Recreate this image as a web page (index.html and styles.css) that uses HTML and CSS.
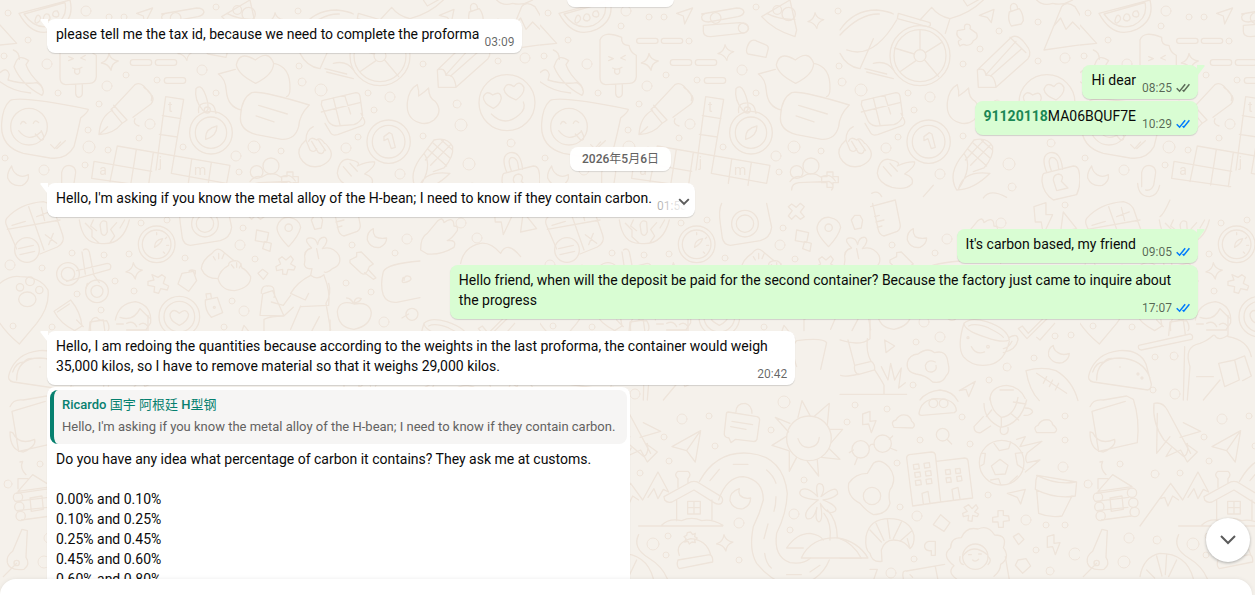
FILE: index.html
```html
<!DOCTYPE html>
<html lang="en">
<head>
<meta charset="utf-8">
<title>Chat</title>
<link rel="stylesheet" href="styles.css">
</head>
<body>
<svg class="defs" aria-hidden="true">
  <symbol id="ticks" viewBox="0 0 14 10"><path d="M.7 5.2 3.6 8.2 9.2 1.2M6.6 7 7.8 8.2 13.4 1.2" fill="none" stroke="currentColor" stroke-width="1.5"/></symbol>
  <symbol id="tail-in" viewBox="0 0 8 13"><path d="M.6 1.4 8 11.2V0H1.600C.4 0 .1.7.6 1.400z" fill="currentColor"/></symbol>
  <symbol id="tail-out" viewBox="0 0 8 13"><path d="M6.400 0H0v11.2l7.400-9.800C7.900.7 7.600 0 6.400 0z" fill="currentColor"/></symbol>
  <symbol id="star" viewBox="-30 -30 60 60"><path d="M-3-26Q2-6 25-3 5 3 3 25-5 5-26 3-6-4-3-26z"/></symbol>
</svg>
<main class="chat">
  <svg class="wallpaper" aria-hidden="true">
    <defs>
      <pattern id="doodles" width="540" height="640" patternUnits="userSpaceOnUse">
        <g class="ink">
          <g transform="scale(.3333)">
            <path d="M57 40 210 0Q225 60 170 88 100 120 57 40zM72 42 195 8Q205 55 160 76 108 94 72 42z"/>
            <path d="M105 62q5-22 14-14 8 10-6 20-8 4-8-6zM130 55q4-18 16-12 10 16-4 20-10 0-12-8zM158 45q0-14 14-12 10 14-2 18-10 0-12-6z"/>
            <path d="M0 75 50 130 0 135M410 40 458 24 434 72 430 48zM485 42 590 24q20 0 22 12-2 10-18 14L505 66q-20 0-20-14 0-8 12-12"/>
            <circle cx="527" cy="54" r="16"/><path d="M490 76 600 68q26 4 26 18-4 14-24 14l-90 10q-22 0-22-16z"/><circle cx="610" cy="84" r="15"/>
            <path d="M665 50 750 0 770 90 765 110Q700 90 665 50zM680 40Q720 60 765 58"/><circle cx="746" cy="42" r="20"/><circle cx="712" cy="30" r="13"/>
            <use href="#star" x="800" y="34" width="56" height="56"/>
            <path d="M180 120Q190 90 245 112q-2 25 22 24 4 22 22 30v64q-2 20-20 20l-72 4q-18-2-17-22zM227 254v28q2 10 10 10 10-2 10-12v-26M206 170l14 6-14 6M256 166l-14 8 14 6M218 204q14 8 28-2M224 208v10q8 10 15 0v-12"/>
            <path d="M40 150q18 6 18 28M46 190q10-30 40-8l-8 12q10 30 44 60 14 20 4 32-60-30-84-86zM0 218q20-20 28 6l-4 16q50 14 86 8 18 10 18 22M0 245q40 30 92 34"/>
            <use href="#star" x="300" y="156" width="60" height="60"/><use href="#star" x="530" y="130" width="56" height="56"/>
            <rect x="391" y="179" width="64" height="17" rx="8"/><rect x="466" y="179" width="64" height="17" rx="8"/><rect x="493" y="233" width="64" height="17" rx="8"/>
            <rect x="290" y="115" width="64" height="15" rx="7"/><rect x="364" y="115" width="64" height="15" rx="7"/>
            <path d="M622 140q10-28 30-16l24 10q12 4 8 16l-6 22-54-10q-8-6-2-22z"/>
            <path d="M767 250Q715 225 709 195 718 150 766 180 806 148 821 190 820 225 767 250zM706 208 655 222q22 14 24 50 4 50 46 58M822 190q50 10 48 76 0 20-10 24"/>
            <path d="M755 278Q780 270 928 315 898 345 896 380 885 420 845 418L770 404Q715 390 722 345 725 295 755 278zM776 316 862 342M768 348 822 366"/>
            <path d="M30 302Q60 286 265 328 265 336 242 354 230 410 222 440 200 480 150 474L70 460Q0 440 5 370 8 320 30 302zM62 372q6-14 16-2M100 370q6-14 16-2M56 392q30 38 66 4M106 402l16 18q12 2 8-14l-6-14M152 434l12 12 18-20M170 446l26-24"/><circle cx="87" cy="380" r="55"/>
            <path d="M345 318 405 254q14-8 26 4l26 30q6 12-4 24l-54 40M345 318l-12 10 34 42 14-10-40-44M338 330Q300 350 297 404 340 402 366 370M297 404l26-24M432 262q30 20 22 40M405 356q-8 16 12 22"/>
            <path d="M497 290 551 298 514 520M497 290 468 510M487 347 543 356M478 403 532 411M352 438 690 496 680 550M352 438 330 545M282 484 455 514M282 484 275 535 452 560M409 448 392 555M460 457 445 560M575 478 565 550M634 488 624 556M514 520 680 550"/>
            <path d="M588 266q12-14 24 8 14 30 12 54-8 14-16 2-26-30-20-64zM596 338q-4-24 14-28 26-6 34 14l4 16M617 412q0-26 34-34 0 30-34 40z"/><circle cx="633" cy="398" r="64"/><circle cx="633" cy="398" r="47"/><circle cx="622" cy="330" r="9"/>
            <path d="M966 302 1068 278q10 0 12 10l8 58q-4 20-26 28l-54 4q-20-2-26-20l-18-44zM964 336l116-28M1000 294l20 80M1034 286l18 56M975 370l18 30q4 8 20 4l76-28q8-6 4-16l-10-20"/>
            <path d="M940 380q-22 10-22 40-30 26-18 52 20 36 62 26 40-18 30-46-14-24-18-22-14-20-24-10-18-12-24 4M918 420l12 30q14 10 20-4M935 424l20 34q14 8 18-8M955 420l22 32M1012 520q6-44 34-42 40 8 26 20 30-14 52-12 4 12-30 36 30 10 22 30-20 20-60 10-40-12-44-42M1030 500l24 28M1050 490l22 24"/>
            <circle cx="1166" cy="425" r="65"/><circle cx="1166" cy="425" r="49"/><path d="M1152 410l16-12 8 4 10 40-12 4-10-30-12 6zM1222 308q4-40 30-54 6 20 4 34 20-14 30-24 0 30 20 40 24 30-4 56-20 16-44 8-40-12-36-60z"/>
            <path d="M35 498q-14 20-12 36 12 28 44 22 22-12 18-32-18 10-34 0-14-10-16-26zM185 560v-42q4-22 22-22 20 2 20 22l-6 38q-8 18-24 14M173 550q2 40 36 40 24-4 30-34"/>
            <path d="M750 545q14-20 36-14 30-20 56 0 28-14 44 12M755 570q0-20 22-22l90-4q20 10 8 26M845 530h16v-14h18v14h16v18h-16v14h-18v-14h-16z"/><circle cx="770" cy="516" r="19"/><circle cx="813" cy="498" r="24"/>
            <text x="504" y="336" class="glyph">t</text><text x="298" y="526" class="glyph">a</text><text x="476" y="502" class="glyph">j</text><text x="582" y="524" class="glyph">m</text>
          </g>
          <g transform="translate(300 0) scale(.3333)">
            <circle cx="240" cy="167" r="90"/><circle cx="240" cy="167" r="78"/><circle cx="240" cy="167" r="18"/>
            <path d="M240 149V90M256 158 304 128M254 180l42 50M228 182l-46 32M223 162l-60-18M0 90Q40 30 110 30q38 4 50 12M0 105Q60 40 118 42M20 150Q100 180 170 60M0 160q20 40 60 46l40-90M75 206 140 222M80 216q80 20 80 20M100 190q40-10 60 20M175 40l95 28q4 12-8 12L172 56zM240 60 275 22q20 26 55 34Q390 40 430 0M330 56 316 100M370 0l12 18 36-20"/>
            <path d="M352 92l22-4q-4-20 14-14 6 6 2 12l20 14q6 16-10 22-4 14-22 14-8-6-18 2-12-16 4-20-18-8-12-26zM418 46l44-18-8 40-12-16zM508 36l30-10q12 16 12 36l-6 10-30 6q-12-18-6-42zM513 34q-6-22 8-24 12 2 12 18"/>
            <path d="M412 210 514 112q20-12 44 22 20 24 6 42L468 262 415 262zM412 210q22-10 26 16 24-6 30 34M438 224 528 124M510 112l48 46M452 228 545 146"/>
            <path d="M612 150 665 20q14-18 40 0l64 108zM640 80l22-26 16 34 20-22 24 24M590 0q20 20 48 10 30 8 60-10"/>
            <circle cx="621" cy="308" r="84"/><path d="M574 342q40 40 82 4 24-20 14-40M580 325q-30-14-30-34 8-22 28-6 24-14 26 10-4 20-24 30zM648 300q-34-14-36-32 8-24 30-8 16-22 30 2 2 20-24 38z"/>
            <path d="M350 570Q320 520 372 460 400 500 356 566 370 510 450 520 400 570 350 570zM372 460l30-40q40-10 56 20 4 30-26 64L400 515M384 448l56 50M400 430l50 44M424 420l34 30M376 480l54-58M392 496l60-62"/>
            <path d="M612 520 700 498q12 0 16 12 10 40-6 74l-70 16q-30-20-34-56 0-20 6-24zM620 516q-20-50 10-58 32-6 38 50M634 512q-14-36 2-40 18 0 20 34M640 540q0-16 16-18 18 4 8 22l20 20-34 8z"/>
            <path d="M95 580q20-10 30 10M250 590l30-34M430 594q20-30 70-2"/>
          </g>
          <g transform="translate(0 200) scale(.3333)">
            <path d="M20 55Q60 10 130 5q20 4 30 20l28 80q8 22-16 36L120 162M20 55q-6 10 0 22l30 70M22 88 180 60M86 20l46 130M36 76l40-12M110 50l38-14M124 22l10 40M136 104l34 26M160 100l-14 34"/><circle cx="81" cy="150" r="37"/><path d="M56 146l44-10M60 164l44-10"/>
            <path d="M240 50Q250 45 270 0M238 60q10 70 60 70 70 10 90-70M256 70l20 20 0 20 20 18M280 60l-8 18 18 14M320 66q-14-10-20 8l4 26q10 14 18-4zM350 68l-18 20 12 20-14 20M374 60l-14 24"/>
            <circle cx="470" cy="133" r="55"/><circle cx="470" cy="133" r="43"/><path d="M464 140q0-20 24-24-6 16-24 26zM470 98v6M500 112l-4 4M506 136h-6M494 160l-4-4"/>
            <path d="M545 10q-10 20-4 60l6 44q4 20 24 22l90-14q30-8 34-40L680 10"/><circle cx="615" cy="71" r="40"/><circle cx="615" cy="71" r="26"/>
            <path d="M866 140q-40-40-34-62 10-28 36-26 32 6 34 30-6 26-36 58z"/><circle cx="866" cy="83" r="11"/>
            <path d="M934 60l10-14h16l8 14-4 24-20 4zM770 90l36 8-6 30-34-6zM794 124l20 6-4 24-22-8zM755 12l14 10 12-12 12 10-12 16 12 14-12 8-14-12-12 12-10-10 12-16-12-12z"/>
            <path d="M992 20 1066 0M998 10l16 76q4 20 18 22l40-14q12-8 8-24l-14-70M1004 50l14-4M1008 66l24-6M1012 82l14-4M1120 86q-20 10-18 34 10 26 38 22 20-10 20-28-20 4-34-4-8-12-6-24z"/>
            <path d="M250 150q12-8 18 6l14 70M246 156l10 66M200 244l130-36q8-16-8-18l-92 22M262 250l-4 14M282 226l16 22"/><circle cx="204" cy="222" r="34"/><circle cx="204" cy="222" r="20"/><circle cx="291" cy="274" r="34"/><circle cx="291" cy="274" r="18"/>
            <use href="#star" x="374" y="184" width="58" height="58"/>
            <path d="M456 224l18 8 12-8 10 8-6 18 16 8-4 12-20-4-6 14-14-4 2-16-20-4 0-12 18-4zM546 220l34-6 10 28-24 32-32-22zM568 216q-4-6 8-6l10 2v10"/>
            <path d="M636 160q-30 20-32 46 12 30 50 30M636 160q14-20 30-8l36 30M640 170l6 10M656 160v16M672 162l-6 14M686 196q-26 14-32 40 10 36 50 36 50-10 48-42-14-22-26-26-4-22-20-22-22 2-20 14zM694 194l8 10M710 188v14M724 192l-6 12"/>
            <path d="M846 170l12 10 14-12 8 10-8 14 14 8-4 10-18-2-4 16-12-2 0-14-18 4-2-12 14-8-6-14zM774 220l14-12 16 12-14 18z"/>
            <path d="M915 180q-6-30 20-36-26-26-8-30 20-4 26 20 4-24 22-22 14 10-8 34 30-10 50 20 10 30-20 40-16 14-24 10M915 180l-2 14q4 14 20 12M936 206l-4 20q20 16 40-2M950 146l6 30M932 226q-40 20-60 54l44 20 10-20M972 226q20 50 14 90l-84 4M986 250q10 30-8 60l14 80M872 286l-22 30-36-10M902 318l-30 70M958 350l-22 42M784 280q0-24 18-22 20-2 20 14 4 14 0 20M788 282l30-10 34 76-72-2zM852 348q-40 0-60 10l0 34M880 322l-26 24"/>
            <path d="M1050 180l20-10 0-12 14-2 36 36-12 8q-10 30-24 20l-34-32zM1094 218l26 20 8-4-24-26"/>
            <path d="M1150 215q10-24 110-32M1150 215q-10 40 0 70 10 24 40 22l70-14M1212 242q0-20 18-12 10 10-10 16-20 8-10-14"/>
            <path d="M0 250Q30 225 60 230 120 230 144 270 150 320 110 370L58 432Q20 400 0 370"/><ellipse cx="82" cy="298" rx="26" ry="22"/><circle cx="60" cy="262" r="11"/><circle cx="90" cy="244" r="13"/><circle cx="118" cy="270" r="11"/>
            <path d="M162 334 212 300q30 36 34 78l-22 14Q180 370 162 334zM172 336l36-24M272 392q-4-40 18-40 12 14 30 10 12 20 4 30M346 360q10-50 60-55 50 10 46 64l-14 20M360 352q40 14 60-26 20 20 28 28M350 372h20M380 370q20-10 30 10M418 374q14-10 24 4M380 390h60"/>
            <circle cx="538" cy="350" r="61"/><circle cx="538" cy="350" r="46"/><path d="M538 376q-30-14-28-34 10-20 28-2 20-18 28 4-2 20-28 32zM616 300l36-8 16 46-34 14q-20-20-18-52zM620 294l-2-12 14-2 2 12"/><circle cx="643" cy="322" r="3"/>
            <path d="M1062 312q-44-14-50 22 2 50 50 54 50-10 52-50-4-34-52-26zM1062 312q-10-18-22-18M1062 308q4-20 22-12-6 12-22 12M1206 354l20-12"/><circle cx="1236" cy="343" r="18"/>
            <path d="M718 416l14-40 32 40M770 500q-20-60 0-78 80-10 90 6l-18 80"/>
            <path d="M1262 150q0-40 20-50l30-36q16-16 20 4 30-22 30 10 14 0 10 14-16 24-30 30 30-4 20 20-40 24-80 20zM1382 190q10-50 60-60 30-4 60 30 20-40 60 10M1482 20l36-12 0 36 20 0-28 60-6-38-18 0zM1570 36l40 50-48 10z"/>
          </g>
          <g transform="translate(300 200) scale(.3333)">
            <path d="M0 420q60 20 90-4l0-56M24 420l20 76M82 416q-4 40 10 66M44 496l50-12q12 10 10 26l-50 14q-14-10-10-28zM56 522q-40 10-54 4M104 510q20 30 28 46v26M0 583H200M124 500l20 40 8-50 12 50 20-36-8 60 20-16"/>
            <path d="M234 462q30-22 50-4 36-10 40 30 8 30-6 40-10 24-40 18-20-20-50-24-30-6-26-34 6-24 32-26zM286 486q-22-10-30 10 0 22 20 20 16-4 12-20M134 420l30 18-26 20zM358 572l48-28-20 46-8-22z"/>
            <path d="M372 370Q350 440 370 470q30 34 80 24 44-10 58-70M372 370q20-20 70-4 60 20 66 54-20 10-70-8-66-20-66-42zM386 378q20-10 60 6 40 20 44 28M508 412q26-14 26 8-6 30-44 38M516 424q-10 20-26 22M394 440q14 26 40 16"/><circle cx="384" cy="413" r="3"/><circle cx="444" cy="440" r="4"/>
            <path d="M535 386l12-8 18 22 46-46M535 386l26 30 60-60M590 412l10 8 44-50M640 436q-18 10-14 32 14 26 42 20 20-10 20-28-20 8-34-2-14-8-14-22z"/>
            <path d="M558 512q50-14 90 0 50 30 66 90M558 512q10 60 40 90M590 520l90 60M620 530l-10 20M638 540l-10 20M656 550l-10 20M450 600q0-40 50-44 40 4 56 40M480 570l40 0M240 600q20-26 60-30 40 4 54 34"/>
          </g>
          <g transform="translate(0 200) scale(.3333)">
            <path d="M28 520q20-60 90-68 60-4 80 40l16 60q0 14-10 18L40 546q-20-4-12-26zM50 540q0-66 70-66 70 4 90 60M38 516q10-30 34-30 10-14 30-10M120 500v2"/><circle cx="174" cy="522" r="3"/><circle cx="186" cy="534" r="3"/>
            <path d="M176 436 330 402q12 4 6 16L184 450q-12-2-8-14zM266 406l4-40 40-6 6 44M250 380l-20-20M330 500q-20-60 30-70 20-6 40-24M330 500l-8 100M314 440l-4 160M404 406q10 20 40 0v-60M444 410q60 10 70 60M416 490l48-10 14 60-44 20zM464 480l30-12 20 60-26 14M370 600l50-60M350 530h50"/>
          </g>
          <g transform="translate(-120 400) scale(.3333)">
            <circle cx="1167" cy="115" r="67"/><path d="M1134 116q10 30 36 26 26-4 28-30M1098 110l-42 26 50 16M1110 70l-44-18 40 44M1134 52l12-50 24 44M1184 48l44-38-6 66M1228 88h40l-34 40M1228 146l32 32-56-6M1192 180l4 48-34-44M1130 172l-22 42 0-60M360 250"/>
            <path d="M925 36l86 14q8 2 8 10l-8 58q-4 8-12 6l-52-6-14 10-6-14q-16-2-14-16l6-54q0-8 6-8zM948 36q0-26 28-26 20 6 20 30M936 64l62 10M932 80l46 8M756 140 842 92 826 186 800 152zM800 152l40-58"/>
            <path d="M838 245Q890 150 990 160 1090 170 1102 280 1100 340 1070 400 1060 470 1110 488 1150 494 1172 474M896 300Q920 230 970 230 1030 240 1030 300 1020 340 1000 380 986 450 1010 490 1050 540 1110 560 1200 550 1228 480M870 242l28-34M940 193h44M1040 210q20 16 28 40M1068 290q0 24-6 44M1044 372l-12 44M1034 460q4 30 20 44M1100 524h44M1170 516l30-20"/>
            <path d="M732 290 812 246q10-4 20 0l72 44q8 10 0 20-10 6-22-2L822 270 756 306q-14 4-22-6zM770 300v62M876 300v60M774 262v-26q-14-12 0-22h30q12 10 0 22v14M803 304h38v38h-38zM822 304v38M803 323h38M656 378H908M725 376q20-22 60-14 30-14 60 0 30-6 64 14M540 378 632 250l36 50 46-84 32 60-16-8-16 28-12-30-18 26M600 296l14-4 10 26 14-30 18 12"/>
            <path d="M958 266q-30 10-28 36 10 28 40 24 22-10 22-32-20 4-32-8-6-10-2-20zM778 466Q764 430 812 416 860 420 872 464M774 480l96-16q10 6 8 22l-100 20q-10-8-4-26zM812 396l6 8 8-4-2 10 8 4-8 6 2 8-10-2-8 6-4-8-10 2 4-10-6-6 8-4 2-8z"/><use href="#star" x="886" y="400" width="58" height="58"/>
            <path d="M1195 300q-70-6-52-30 20-12 50 20-10-50 14-36 10 14-4 36 50-40 50-8-14 14-44 18 50 20 36 34-20 14-44-24 10 50-4 56-14-6-6-44-10 40-30 34-16-20 34-56zM1212 340q24 30 18 80M1222 330q30 30 30 84M1100 444q30-44 70-44 30 4 40 20M1100 444h50M1144 474q30-64 110-60 60 10 90 60z"/>
            <path d="M582 10q26-6 40 20l70 130M582 10q-6 60 30 110l60 50q16-10 10-40M592 40l-2 120 40-50M670 68l52 26-62 18M634 144l-16 26 44-20 20 36 30-30-36-26"/>
            <path d="M390 20q10-24 40-20l70-12 20 10q20 60 12 130l-116 26-20-120 100-30M390 96l8 2q20 40 66 20 6 20-34 38-40-4-40-60zM420 186l8-2q-10 20 10 40M414 266v-30h30M414 274l44-50 58 36zM410 280l100-14M406 304l100-12M410 332l94-10M424 360l90-12M450 294l36-6 4 40-36 6z"/><circle cx="414" cy="292" r="14"/><circle cx="418" cy="320" r="14"/><circle cx="422" cy="348" r="14"/><circle cx="516" cy="278" r="14"/><circle cx="520" cy="308" r="14"/><circle cx="524" cy="336" r="14"/>
            <path d="M426 388l16 4-4 80q14 20-6 36-44 6-50-20-4-20 16-34zM410 490q-20 20-40 40M360 540"/><circle cx="410" cy="489" r="8"/>
            <path d="M540 530q10-60 60-70 80 0 100 76M560 510l24 24M590 468l16 60M620 464l-4 60M650 480l-24 50M656 404q-20 40 30 70 40 24 56 62"/>
          </g>
          <g transform="translate(300 400) scale(.3333)">
            <path d="M237 40q6-40 50-44 60 0 62 36l-6 6-98 8q-8 0-8-6z"/><circle cx="280" cy="10" r="13"/><circle cx="311" cy="10" r="13"/>
            <path d="M432 10q0 50 50 72 60-10 78-82M450-6q4 40 34 58 40-4 50-60M484 52v30M455 30l-16 20M512 40l24 20M520 6l38 6M430 50l-28 30q0 20 20 18l30-20M556 24q20 0 22 12-8 12-26 10M482 82q-6 20 10 22 16-4 12-22"/>
            <path d="M68 42l22-8 0 30 18-2-14 36-8-26-18 2zM162 82q-12-18 6-22 10-20 34-14 12 8 12 16 16 14 4 22zM590 98q-12-18 4-22 10-20 34-16 10 6 10 14 20 14 6 24zM882 152l24-8-2 30 18-2-16 34-8-28-16 2z"/>
            <circle cx="62" cy="148" r="26"/><circle cx="128" cy="131" r="26"/><path d="M88 140q4-10 14-6M40 150l-12 8M52 174l-8 20M150 144l20 8M148 118l10-10M321 118l14 14"/><circle cx="308" cy="104" r="19"/>
            <path d="M200 174q0-8 8-10l66-8q10 0 12 8l16 142-84 12zM288 184l86-10q8 0 10 8l14 112-96 12M220 194l16-2 2 14-16 2zM252 190l16-2 2 14-16 2zM224 218l16-2 2 14-16 2zM256 214l16-2 2 14-16 2zM226 242l16-2 2 14-16 2zM258 238l16-2 2 14-16 2zM316 210l14-2 2 14-14 2zM346 207l14-2 2 14-14 2zM318 234l14-2 2 14-14 2zM350 230l14-2 2 14-14 2zM250 312l-4-32 18-6 6 36M340 298l-4-30 18-6 6 34"/>
            <circle cx="485" cy="188" r="67"/><path d="M480 178l24 18-8 26-30 2-12-26zM462 130l16 22 28-6 6-20M424 160l12 0-4 32-10 6M526 160l22-2M526 160l6 34 20 14M452 240l24-4 6 18M510 248l22-20M530 118l26-8-16 30 66-16-44 34q-10 20 0 30l38-8-44 36"/>
            <path d="M100 190q20-16 46 10 24 30 10 60-14 14-6 50-10 34-50 34-20-10-40-34-40-20-34-60 20-30 56-30z"/><circle cx="96" cy="288" r="26"/>
            <path d="M588 240l4-14 118 20-4 42q-60 10-120-20zM590 226q60 30 116 20M590 270l6 70q34 14 70 8l30-60M502 280l54-12-14 44-10-20z"/>
            <path d="M78 410q10-54 70-54 60 0 74 50 2 30-12 40-14-20-34-24-40-10-52 28l2 34q-30 4-36-24-16-10-12-50zM90 390l34 36M108 370l24 52M142 356l8 60M184 366l-24 50M214 394l-34 30M210 446l-8-30"/>
            <path d="M302 344l28 24-18 26-32-20zM386 314l10 12 12-12 6 10-10 12 12 6-4 8-14-4-2 18-12-2 2-16-16 4-2-10 14-6-10-12zM474 332h16v14l16 2 2 14-18 2v18l-14 0-2-16-16 0v-14l16-2zM286 424h-20q-14 4-12 18 4 12 20 10v14h12zM520 410l16-10 16 18-16 16zM622 410l20-6 0 26 18-2-14 36-8-24-16 2zM534 480l24-4 14 22-24 22-22-24z"/>
            <path d="M350 537q-30-20-8-40-40-30-10-54 0-30 32-30 14-34 50-26 30-14 50 18 40 0 26 38 22 30-8 50 0 20-20 36"/><circle cx="406" cy="470" r="38"/><path d="M368 468q30-40 74-4M398 480q8 8 18-2M386 464h8M416 462h8M360 470q-4 20 10 24M444 470q14 10 0 24M190 537q-6-28 10-24l114-20M286 500l8 40M210 524l8 8M496 470l12 70M0 475l64 0Q40 430 0 416M90 508l22 0-12 34"/>
          </g>
          <g class="dots">
            <circle cx="8" cy="13" r="3"/><circle cx="86" cy="11" r="5"/><circle cx="28" cy="40" r="3"/><circle cx="109" cy="17" r="3"/><circle cx="124" cy="17" r="3"/><circle cx="149" cy="41" r="3"/><circle cx="216" cy="7" r="3"/><circle cx="81" cy="26" r="3"/><circle cx="4" cy="56" r="3"/><circle cx="47" cy="64" r="5"/><circle cx="126" cy="75" r="3"/><circle cx="107" cy="86" r="5"/><circle cx="58" cy="93" r="3"/><circle cx="157" cy="80" r="3"/><circle cx="202" cy="70" r="5"/><circle cx="216" cy="93" r="3"/><circle cx="99" cy="104" r="3"/><circle cx="150" cy="124" r="5"/><circle cx="88" cy="130" r="3"/><circle cx="139" cy="138" r="3"/><circle cx="89" cy="147" r="6"/><circle cx="108" cy="150" r="3"/><circle cx="183" cy="147" r="3"/><circle cx="254" cy="147" r="6"/><circle cx="236" cy="156" r="5"/><circle cx="281" cy="151" r="3"/><circle cx="44" cy="170" r="5"/><circle cx="85" cy="165" r="3"/><circle cx="5" cy="158" r="3"/><circle cx="239" cy="172" r="3"/><circle cx="302" cy="82" r="4"/><circle cx="321" cy="90" r="6"/><circle cx="299" cy="66" r="3"/><circle cx="298" cy="11" r="3"/><circle cx="368" cy="93" r="3"/><circle cx="390" cy="97" r="5"/><circle cx="374" cy="110" r="3"/><circle cx="358" cy="137" r="3"/><circle cx="346" cy="148" r="5"/><circle cx="400" cy="174" r="5"/><circle cx="423" cy="136" r="3"/><circle cx="469" cy="164" r="6"/><circle cx="472" cy="187" r="4"/><circle cx="511" cy="143" r="4"/><circle cx="457" cy="104" r="4"/><circle cx="461" cy="125" r="6"/><circle cx="459" cy="31" r="3"/><circle cx="498" cy="22" r="3"/><circle cx="525" cy="58" r="5"/><circle cx="498" cy="61" r="3"/><circle cx="440" cy="49" r="3"/><circle cx="423" cy="64" r="3"/>
            <circle cx="141" cy="223" r="3"/><circle cx="167" cy="220" r="3"/><circle cx="72" cy="253" r="3"/><circle cx="104" cy="255" r="3"/><circle cx="129" cy="254" r="3"/><circle cx="10" cy="265" r="5"/><circle cx="42" cy="268" r="3"/><circle cx="185" cy="258" r="3"/><circle cx="240" cy="245" r="5"/><circle cx="243" cy="228" r="3"/><circle cx="255" cy="259" r="3"/><circle cx="115" cy="281" r="3"/><circle cx="77" cy="294" r="3"/><circle cx="134" cy="291" r="3"/><circle cx="232" cy="301" r="3"/><circle cx="244" cy="311" r="5"/><circle cx="101" cy="310" r="3"/><circle cx="52" cy="327" r="3"/><circle cx="224" cy="327" r="3"/><circle cx="352" cy="245" r="3"/><circle cx="395" cy="253" r="3"/><circle cx="407" cy="239" r="5"/><circle cx="346" cy="283" r="3"/><circle cx="371" cy="292" r="3"/><circle cx="384" cy="322" r="5"/><circle cx="461" cy="223" r="5"/><circle cx="477" cy="238" r="5"/><circle cx="525" cy="205" r="3"/><circle cx="376" cy="342" r="3"/><circle cx="400" cy="337" r="5"/><circle cx="467" cy="367" r="4"/><circle cx="449" cy="380" r="3"/><circle cx="515" cy="336" r="3"/><circle cx="531" cy="335" r="3"/><circle cx="494" cy="358" r="3"/><circle cx="373" cy="385" r="3"/><circle cx="13" cy="326" r="3"/><circle cx="75" cy="357" r="3"/><circle cx="94" cy="356" r="4"/><circle cx="73" cy="390" r="3"/><circle cx="95" cy="394" r="5"/>
            <circle cx="142" cy="419" r="5"/><circle cx="169" cy="416" r="3"/><circle cx="124" cy="437" r="3"/><circle cx="175" cy="446" r="3"/><circle cx="129" cy="461" r="3"/><circle cx="231" cy="430" r="3"/><circle cx="244" cy="402" r="6"/><circle cx="264" cy="480" r="3"/><circle cx="254" cy="514" r="5"/><circle cx="250" cy="530" r="3"/><circle cx="199" cy="523" r="5"/><circle cx="113" cy="544" r="6"/><circle cx="128" cy="536" r="3"/><circle cx="126" cy="555" r="3"/><circle cx="199" cy="560" r="3"/><circle cx="347" cy="409" r="3"/><circle cx="315" cy="405" r="3"/><circle cx="307" cy="422" r="3"/><circle cx="422" cy="417" r="3"/><circle cx="430" cy="444" r="3"/><circle cx="380" cy="440" r="3"/><circle cx="525" cy="416" r="3"/><circle cx="525" cy="440" r="3"/><circle cx="523" cy="467" r="5"/><circle cx="357" cy="463" r="3"/><circle cx="448" cy="495" r="3"/><circle cx="360" cy="507" r="3"/><circle cx="377" cy="516" r="5"/><circle cx="486" cy="520" r="5"/><circle cx="506" cy="525" r="3"/><circle cx="525" cy="525" r="3"/><circle cx="496" cy="550" r="3"/><circle cx="535" cy="554" r="6"/><circle cx="510" cy="571" r="4"/><circle cx="351" cy="573" r="5"/><circle cx="374" cy="559" r="3"/><circle cx="8" cy="484" r="4"/><circle cx="40" cy="464" r="3"/><circle cx="75" cy="474" r="4"/><circle cx="100" cy="473" r="3"/><circle cx="49" cy="538" r="5"/><circle cx="44" cy="562" r="6"/><circle cx="77" cy="540" r="4"/>
          </g>
        </g>
      </pattern>
    </defs>
    <rect width="100%" height="100%" fill="url(#doodles)"/>
  </svg>

  <div class="messages">
    <div class="day"><span class="chip">2026<span class="han">年</span>4<span class="han">月</span>29<span class="han">日</span></span></div>
    <article class="msg in">
      <svg class="tail"><use href="#tail-in"/></svg>
      <p class="text">please tell me the tax id, because we need to complete the proforma</p>
      <div class="meta"><time>03:09</time></div>
    </article>
    <article class="msg out">
      <svg class="tail"><use href="#tail-out"/></svg>
      <p class="text">Hi dear</p>
      <div class="meta"><time>08:25</time><svg class="ticks"><use href="#ticks"/></svg></div>
    </article>
    <article class="msg out next">
      <p class="text"><a class="number" href="#">91120118</a>MA06BQUF7E</p>
      <div class="meta"><time>10:29</time><svg class="ticks read"><use href="#ticks"/></svg></div>
    </article>
    <div class="day"><span class="chip">2026<span class="han">年</span>5<span class="han">月</span>6<span class="han">日</span></span></div>
    <article class="msg in">
      <svg class="tail"><use href="#tail-in"/></svg>
      <p class="text">Hello, I'm asking if you know the metal alloy of the H-bean; I need to know if they contain carbon.</p>
      <div class="meta"><time>01:53</time></div>
      <button class="menu" aria-label="Message menu"><svg viewBox="0 0 12 8" width="12" height="8"><path d="M1.200 1.200 6 6l4.800-4.800" fill="none" stroke="currentColor" stroke-width="1.900"/></svg></button>
    </article>
    <article class="msg out">
      <svg class="tail"><use href="#tail-out"/></svg>
      <p class="text">It's carbon based, my friend</p>
      <div class="meta"><time>09:05</time><svg class="ticks read"><use href="#ticks"/></svg></div>
    </article>
    <article class="msg out next">
      <p class="text">Hello friend, when will the deposit be paid for the second container? Because the factory just came to inquire about the progress</p>
      <div class="meta"><time>17:07</time><svg class="ticks read"><use href="#ticks"/></svg></div>
    </article>
    <article class="msg in">
      <svg class="tail"><use href="#tail-in"/></svg>
      <p class="text">Hello, I am redoing the quantities because according to the weights in the last proforma, the container would weigh 35,000 kilos, so I have to remove material so that it weighs 29,000 kilos.</p>
      <div class="meta"><time>20:42</time></div>
    </article>
    <article class="msg in next reply">
      <blockquote class="quote">
        <div class="author">Ricardo <span class="han">国宇 阿根廷</span> H<span class="han">型钢</span></div>
        <div class="quoted">Hello, I'm asking if you know the metal alloy of the H-bean; I need to know if they contain carbon.</div>
      </blockquote>
      <p class="text">Do you have any idea what percentage of carbon it contains? They ask me at customs.<br><br>0.00% and 0.10%<br>0.10% and 0.25%<br>0.25% and 0.45%<br>0.45% and 0.60%<br>0.60% and 0.80%</p>
    </article>
  </div>
  <button class="to-bottom" aria-label="Scroll to bottom"><svg viewBox="0 0 18 12" width="18" height="12"><path d="M2 2l7 7 7-7" fill="none" stroke="currentColor" stroke-width="2"/></svg></button>
  <footer class="composer"></footer>
</main>
</body>
</html>
```
FILE: styles.css
```css
* { box-sizing: border-box; }
body {
  margin: 0;
  font-family: Roboto, "Noto Sans CJK SC", sans-serif;
  font-size: 14px;
  line-height: 20px;
  color: #0a0a0a;
}
.defs { position: absolute; width: 0; height: 0; }
.chat {
  position: relative;
  display: flex;
  flex-direction: column;
  height: 100vh;
  overflow: hidden;
  background: #f5f1eb;
}
.wallpaper { position: absolute; inset: 0; width: 100%; height: 100%; }
.ink { fill: none; stroke: #eee4da; stroke-width: 4; stroke-linecap: round; stroke-linejoin: round; }
.dots { stroke-width: 1; }
.glyph { font-size: 42px; stroke: none; fill: #eee4da; }
.messages {
  position: relative;
  flex: 1;
  min-height: 0;
  display: flex;
  flex-direction: column;
  margin-top: -29px;
  padding: 0 57px 0 47px;
  overflow: hidden;
}
.messages > * { flex: none; margin-top: 12px; }
.messages > .next { margin-top: 2px; }
.day { display: flex; justify-content: center; padding-right: 4px; }
.chip {
  padding: 0 12px;
  border-radius: 8px;
  background: #fffffff2;
  box-shadow: 0 1px 1px #0b141a1f;
  font-size: 12px;
  font-weight: 500;
  line-height: 24px;
  color: #636261;
}
.han { font-weight: 400; }
.msg {
  position: relative;
  max-width: 65%;
  padding: 5px 8px 9px 9px;
  border-radius: 8px;
  box-shadow: 0 1px 1px #0b141a26;
}
.in { align-self: flex-start; background: #fff; }
.out { align-self: flex-end; background: #d9fdd3; }
.tail { position: absolute; top: 0; width: 8px; height: 13px; }
.in .tail { left: -7px; color: #fff; }
.out .tail { right: -7px; color: #d9fdd3; }
.text { margin: 0; }
.text::after { content: ""; display: inline-block; width: 35px; }
.out .text::after { width: 54px; }
.meta {
  float: right;
  display: flex;
  align-items: center;
  gap: 4px;
  height: 16px;
  margin: -10px 0 -6px;
  font-size: 12px;
  line-height: 16px;
  color: #0000009c;
}
.ticks { width: 14px; height: 10px; color: #5c6b58; }
.ticks.read { color: #007bfc; }
.number { color: #1b8755; font-weight: 700; text-decoration: none; }
.menu {
  position: absolute;
  right: 0;
  bottom: 2px;
  display: flex;
  align-items: center;
  justify-content: flex-end;
  width: 40px;
  height: 26px;
  padding: 0 5px 0 0;
  border: 0;
  border-radius: 8px;
  background: linear-gradient(90deg, #ffffff66, #fff 80%);
  color: #5b5b5b;
}
.reply { padding: 3px 3px 9px; }
.reply .text { padding: 5px 6px 0; }
.quote {
  margin: 0;
  padding: 4px 12px 6px 8px;
  border-left: 4px solid #06806f;
  border-radius: 8px;
  background: #f6f5f4;
  font-size: 13px;
}
.author { line-height: 21px; font-weight: 500; color: #06806f; }
.quoted { line-height: 23px; color: #636261; }
.to-bottom {
  position: absolute;
  right: 5px;
  bottom: 33px;
  display: flex;
  align-items: center;
  justify-content: center;
  width: 44px;
  height: 44px;
  padding: 0;
  border: 0;
  border-radius: 50%;
  background: #fff;
  box-shadow: 0 1px 3px #0b141a4d;
  color: #5b5b5b;
}
.composer {
  position: relative;
  height: 16px;
  margin-right: 3px;
  border-radius: 24px 24px 0 0;
  background: #fff;
  box-shadow: 0 0 4px #0b141a14;
}
```
